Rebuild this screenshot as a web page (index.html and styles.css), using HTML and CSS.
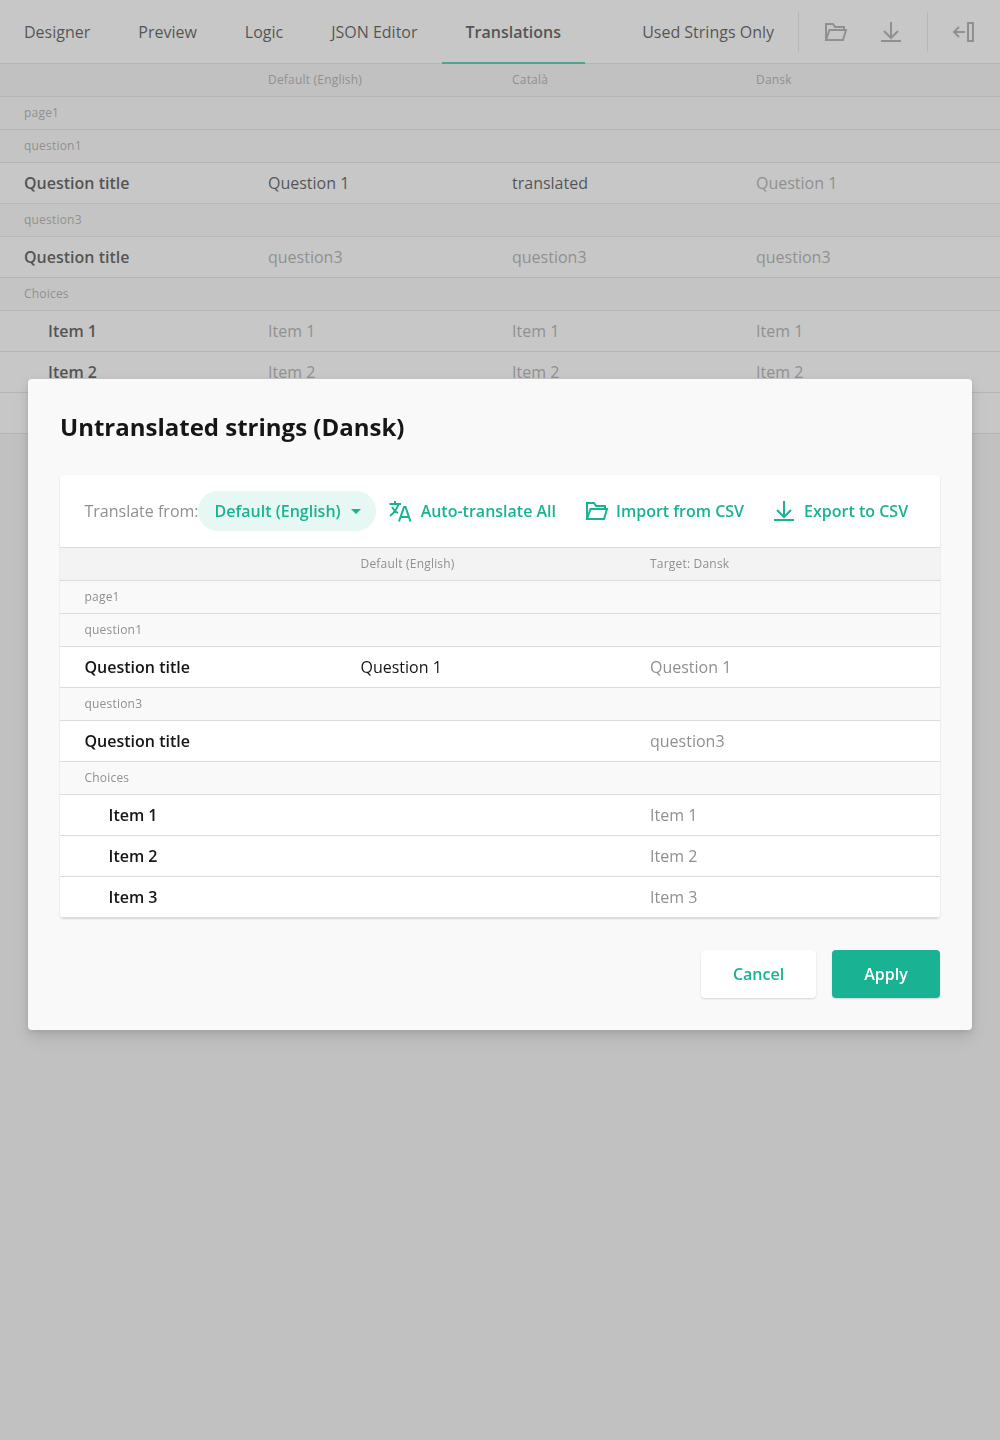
FILE: index.html
```html
<!DOCTYPE html>
<html lang="en">
<head>
<meta charset="utf-8">
<title>Translations</title>
<link rel="stylesheet" href="styles.css">
</head>
<body>
<header class="topbar">
  <nav class="tabs">
    <a class="tab">Designer</a>
    <a class="tab">Preview</a>
    <a class="tab">Logic</a>
    <a class="tab">JSON Editor</a>
    <a class="tab tab-active">Translations</a>
  </nav>
  <div class="tools">
    <span class="tool-label">Used Strings Only</span>
    <span class="sep"></span>
    <svg class="tool-icon folder-gap" viewBox="0 0 24 24"><path class="ic" d="M2 20V4h7l2 3h9v3M2 20h17l3-10H5.500L2 20Z"/></svg>
    <svg class="tool-icon dl-gap" viewBox="0 0 24 24"><path class="ic" d="M12 2v16M5 11l7 7 7-7M2 21h20"/></svg>
    <span class="sep sep-last"></span>
    <svg class="tool-icon exit-icon" viewBox="0 0 24 24"><path class="ic" d="M2 12h11M7 7l-5 5 5 5M16 3h5v18h-5Z"/></svg>
  </div>
</header>
<main class="grid">
  <div class="row head cols-page"><span></span><span>Default (English)</span><span>Català</span><span>Dansk</span></div>
  <div class="row group"><span>page1</span></div>
  <div class="row group"><span>question1</span></div>
  <div class="row item cols-page"><b>Question title</b><span class="val">Question 1</span><span class="val">translated</span><span class="val-ph">Question 1</span></div>
  <div class="row group"><span>question3</span></div>
  <div class="row item cols-page"><b>Question title</b><span class="val-ph">question3</span><span class="val-ph">question3</span><span class="val-ph">question3</span></div>
  <div class="row group"><span>Choices</span></div>
  <div class="row item cols-page"><b class="sub">Item 1</b><span class="val-ph">Item 1</span><span class="val-ph">Item 1</span><span class="val-ph">Item 1</span></div>
  <div class="row item cols-page"><b class="sub">Item 2</b><span class="val-ph">Item 2</span><span class="val-ph">Item 2</span><span class="val-ph">Item 2</span></div>
  <div class="row item cols-page"><b class="sub">Item 3</b><span class="val-ph">Item 3</span><span class="val-ph">Item 3</span><span class="val-ph">Item 3</span></div>
</main>
<div class="overlay">
  <section class="modal">
    <h1 class="modal-title">Untranslated strings (Dansk)</h1>
    <div class="card">
      <div class="toolbar">
        <span class="from">Translate from:</span>
        <span class="pill">Default (English)<i class="caret"></i></span>
        <span class="action act-auto"><svg class="act-icon icon-wide" viewBox="0 0 24 24"><path class="ig" d="M1.500 5H13M7 2v3M10.500 5C9 10 6 14 2 17M4 8c1.500 2.500 3.500 5 6 6M11 22.500 16 8h1.500l5 14.500M12.500 18h8.500"/></svg>Auto-translate All</span>
        <span class="action act-import"><svg class="act-icon icon-mid" viewBox="0 0 24 24"><path class="ig" d="M2 20V4h7l2 3h9v3M2 20h17l3-10H5.500L2 20Z"/></svg>Import from CSV</span>
        <span class="action act-export"><svg class="act-icon" viewBox="0 0 24 24"><path class="ig" d="M12 2v16M5 11l7 7 7-7M2 21h20"/></svg>Export to CSV</span>
      </div>
      <div class="row head cols-modal"><span></span><span>Default (English)</span><span>Target: Dansk</span></div>
      <div class="row group"><span>page1</span></div>
      <div class="row group"><span>question1</span></div>
      <div class="row item cols-modal"><b>Question title</b><span class="val">Question 1</span><span class="val-ph">Question 1</span></div>
      <div class="row group"><span>question3</span></div>
      <div class="row item cols-modal"><b>Question title</b><span></span><span class="val-ph">question3</span></div>
      <div class="row group"><span>Choices</span></div>
      <div class="row item cols-modal"><b class="sub">Item 1</b><span></span><span class="val-ph">Item 1</span></div>
      <div class="row item cols-modal"><b class="sub">Item 2</b><span></span><span class="val-ph">Item 2</span></div>
      <div class="row item cols-modal"><b class="sub">Item 3</b><span></span><span class="val-ph">Item 3</span></div>
    </div>
    <div class="actions">
      <button class="btn btn-cancel">Cancel</button>
      <button class="btn btn-apply">Apply</button>
    </div>
  </section>
</div>
</body>
</html>
```
FILE: styles.css
```css
* { box-sizing: border-box; }
html, body { margin: 0; height: 1440px; }
body {
  background: #f3f3f3;
  font-family: "Open Sans", sans-serif;
  color: #161616;
  font-size: 16px;
  overflow: hidden;
}
.topbar {
  height: 64px;
  background: #fff;
  border-bottom: 1px solid #dcdcdc;
  display: flex;
  justify-content: space-between;
}
.tabs { display: flex; }
.tab {
  padding: 0 24px;
  line-height: 64px;
  height: 64px;
  color: #161616;
}
.tab-active {
  font-weight: 600;
  border-bottom: 2px solid #19b394;
}
.tools { display: flex; align-items: center; }
.tool-label { margin-right: 24px; }
.sep { width: 1px; height: 40px; background: #dcdcdc; }
.tool-icon { width: 24px; height: 24px; display: block; }
.folder-gap { margin-left: 25px; }
.dl-gap { margin-left: 31px; }
.sep-last { margin-left: 24px; }
.exit-icon { margin: 0 24px; }
.ic { fill: none; stroke: #909090; stroke-width: 2; }
.ig { fill: none; stroke: #19b394; stroke-width: 2; }

.row { border-bottom: 1px solid #dcdcdc; display: flex; align-items: center; }
.cols-page { display: grid; grid-template-columns: 244px 244px 244px 268px; padding-left: 24px; }
.cols-modal { display: grid; grid-template-columns: 276px 289.5px 1fr; padding-left: 24.5px; }
.head, .group {
  height: 33px;
  font-size: 12px;
  letter-spacing: 0.2px;
  color: #909090;
  padding-bottom: 1px;
}
.head { background: #f3f3f3; }
.group { padding-left: 24.5px; background: #f9f9f9; }
.grid .group { padding-left: 24px; }
.item { height: 41px; background: #fff; }
.item b { font-weight: 600; }
.item .sub { padding-left: 24px; }
.val { color: #161616; }
.val-ph { color: #909090; }

.overlay {
  position: fixed;
  inset: 0;
  background: rgba(144, 144, 144, 0.5);
  display: flex;
  justify-content: center;
  align-items: flex-start;
  padding: 379px 28px 0;
}
.modal {
  width: 944px;
  height: 651px;
  background: #f9f9f9;
  border-radius: 4px;
  padding: 32px;
  box-shadow: 0 8px 16px rgba(0, 0, 0, 0.1), 0 2px 6px rgba(0, 0, 0, 0.1);
}
.modal-title {
  margin: 0 0 32px;
  font-size: 24px;
  line-height: 32px;
  font-weight: 700;
  color: #161616;
}
.card {
  background: #fff;
  border-radius: 4px;
  box-shadow: 0 1px 2px rgba(0, 0, 0, 0.15);
  overflow: hidden;
}
.toolbar {
  height: 73px;
  display: flex;
  align-items: center;
  padding-left: 24.5px;
  border-bottom: 1px solid #dcdcdc;
}
.from { color: #909090; }
.pill {
  display: flex;
  align-items: center;
  height: 40px;
  padding: 0 15px 0 17px;
  margin-left: -1px;
  border-radius: 20px;
  background: #e7f7f4;
  color: #19b394;
  font-weight: 600;
}
.caret {
  margin-left: 10px;
  border-left: 5px solid transparent;
  border-right: 5px solid transparent;
  border-top: 5px solid #19b394;
}
.action {
  display: flex;
  align-items: center;
  color: #19b394;
  font-weight: 600;
}
.act-icon { width: 24px; height: 24px; margin-right: 8px; }
.icon-wide { margin-right: 9px; }
.icon-mid { margin-right: 7px; }
.act-auto { margin-left: 12px; }
.act-import { margin-left: 29px; }
.act-export { margin-left: 28px; }
.actions { display: flex; justify-content: flex-end; gap: 16px; margin-top: 32px; }
.btn {
  height: 48px;
  border: 0;
  border-radius: 4px;
  font: 600 16px "Open Sans", sans-serif;
  box-shadow: 0 1px 2px rgba(0, 0, 0, 0.15);
}
.btn-cancel { width: 115px; background: #fff; color: #19b394; }
.btn-apply { width: 108px; background: #19b394; color: #fff; }
```
